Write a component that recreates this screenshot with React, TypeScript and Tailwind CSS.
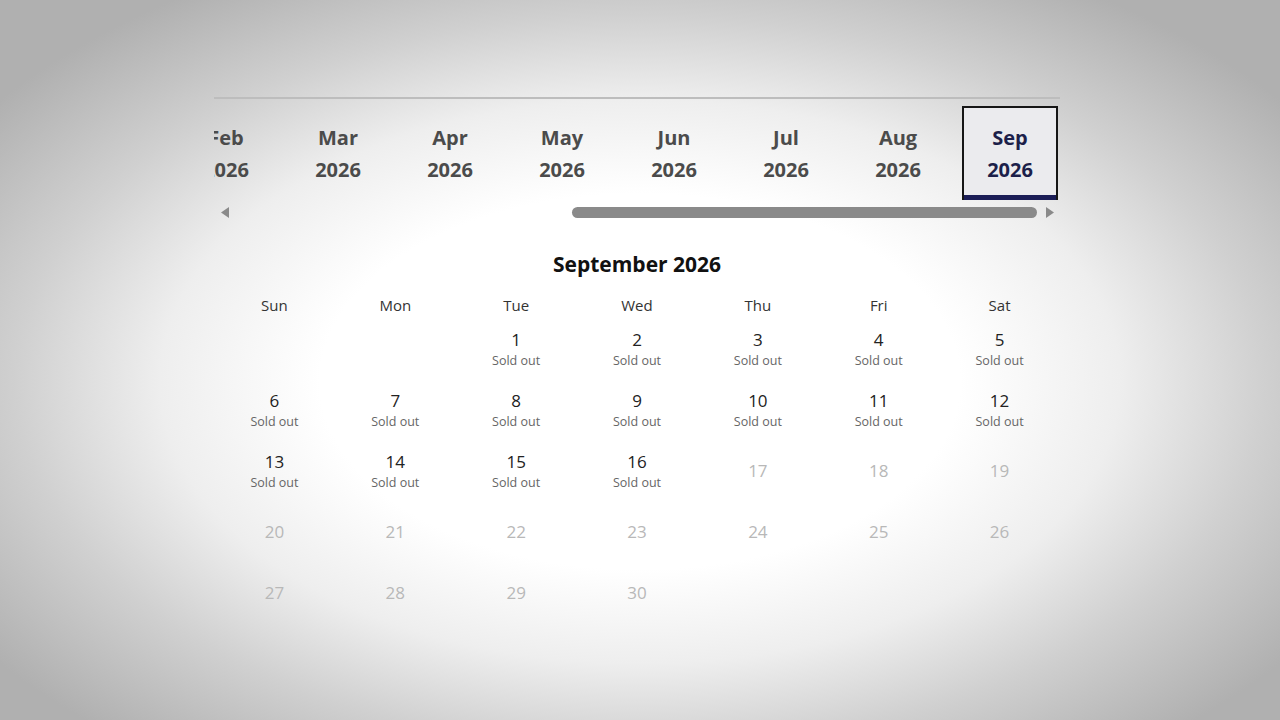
import React from "react";

const months = ["Jan", "Feb", "Mar", "Apr", "May", "Jun", "Jul", "Aug", "Sep"];
const weekdays = ["Sun", "Mon", "Tue", "Wed", "Thu", "Fri", "Sat"];

// Sept 2026 starts on a Tuesday
const leading = 2;
const daysInMonth = 30;
const lastSoldOut = 16;

export default function App() {
  const cells: (number | null)[] = [
    ...Array.from({ length: leading }, () => null),
    ...Array.from({ length: daysInMonth }, (_, i) => i + 1),
  ];

  return (
    <div
      className="w-full h-screen overflow-hidden flex justify-center pt-[97px] pr-[6px] bg-[radial-gradient(800px_470px_at_50%_53%,#ffffff_0%,#ffffff_40%,#eeeeee_60%,#d0d0d0_78%,#b0b0b0_100%)]"
      style={{ fontFamily: '"Open Sans", "Noto Sans", sans-serif' }}
    >
      <div className="w-[846px]">
        {/* Top rule */}
        <div className="h-[2px] bg-[#bdbdbd]" />

        {/* Month tabs, scrolled to the end */}
        <div className="mt-[7px] h-[94px] overflow-hidden flex justify-end gap-4 pr-[2px]">
          {months.map((m) => {
            const selected = m === "Sep";
            return (
              <div
                key={m}
                className={`w-24 h-full shrink-0 flex flex-col items-center text-[20px] font-bold leading-8 ${
                  selected
                    ? "border-2 border-b-0 border-[#161616] bg-[#ebebee] text-[#1c1f4a] pt-[14px]"
                    : "text-[#4b4b4b] pt-[16px]"
                }`}
              >
                <span>{m}</span>
                <span>2026</span>
                {selected && <div className="mt-auto w-full h-[5px] bg-[#1b1d57]" />}
              </div>
            );
          })}
        </div>

        {/* Fake scrollbar */}
        <div className="mt-[3px] h-[18px] flex items-center pl-[7px] pr-[6px]">
          <svg width="8" height="11" viewBox="0 0 8 11">
            <path d="M8 0 L0 5.5 L8 11 Z" fill="#8a8a8a" />
          </svg>
          <div className="flex-1 ml-[6px] mr-[9px] flex justify-end">
            <div className="w-[465px] h-[11px] rounded-full bg-[#8a8a8a]" />
          </div>
          <svg width="8" height="11" viewBox="0 0 8 11">
            <path d="M0 0 L8 5.5 L0 11 Z" fill="#8a8a8a" />
          </svg>
        </div>

        {/* Calendar */}
        <h2 className="mt-[29px] text-center text-[21px] leading-7 font-bold text-[#111]">September 2026</h2>

        <div className="mt-[17px] grid grid-cols-7">
          {weekdays.map((d) => (
            <div key={d} className="text-center text-[15px] leading-5 text-[#333]">
              {d}
            </div>
          ))}
        </div>

        <div className="mt-[14px] grid grid-cols-7">
          {cells.map((day, i) => (
            <div key={i} className="h-[61px] flex flex-col items-center">
              {day !== null && day <= lastSoldOut && (
                <>
                  <span className="text-[17px] leading-[22px] text-[#222]">{day}</span>
                  <span className="mt-[2px] text-[12.5px] leading-4 text-[#666]">Sold out</span>
                </>
              )}
              {day !== null && day > lastSoldOut && (
                <span className="h-[40px] flex items-center text-[17px] text-[#b8b8b8]">{day}</span>
              )}
            </div>
          ))}
        </div>
      </div>
    </div>
  );
}
